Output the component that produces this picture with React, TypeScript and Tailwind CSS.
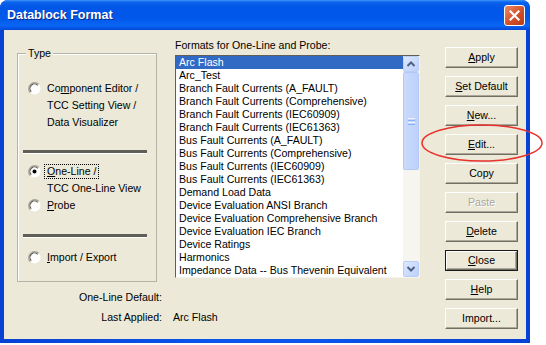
import React from 'react';

const formats = [
  'Arc Flash',
  'Arc_Test',
  'Branch Fault Currents (A_FAULT)',
  'Branch Fault Currents (Comprehensive)',
  'Branch Fault Currents (IEC60909)',
  'Branch Fault Currents (IEC61363)',
  'Bus Fault Currents (A_FAULT)',
  'Bus Fault Currents (Comprehensive)',
  'Bus Fault Currents (IEC60909)',
  'Bus Fault Currents (IEC61363)',
  'Demand Load Data',
  'Device Evaluation ANSI Branch',
  'Device Evaluation Comprehensive Branch',
  'Device Evaluation IEC Branch',
  'Device Ratings',
  'Harmonics',
  'Impedance Data -- Bus Thevenin Equivalent',
];

const Radio = ({ checked }: { checked?: boolean }) => (
  <svg width="13" height="13" viewBox="0 0 13 13" className="shrink-0">
    <circle cx="6.5" cy="6.5" r="6" fill="#ffffff" />
    <path d="M2.2 10.8 A6.1 6.1 0 0 1 10.8 2.2" fill="none" stroke="#a9a79c" strokeWidth="1.4" />
    <path d="M3.3 9.7 A4.5 4.5 0 0 1 9.7 3.3" fill="none" stroke="#55544c" strokeWidth="1.1" />
    {checked && <circle cx="6.5" cy="6.5" r="2" fill="#000000" />}
  </svg>
);

const Key = ({ children }: { children: React.ReactNode }) => <span className="underline underline-offset-[1px]">{children}</span>;

const Separator = () => (
  <div className="ml-[5px] mr-[9px] h-[4px] border-t-[3px] border-[#5f5e57] border-b border-b-white" />
);

const DialogButton = ({
  children,
  isDefault,
  disabled,
}: {
  children: React.ReactNode;
  isDefault?: boolean;
  disabled?: boolean;
}) => (
  <div className={`h-[21px] w-[73px] ${isDefault ? 'border border-[#1a1a1a]' : ''}`}>
    <div
      className={`h-full w-full flex items-center justify-center bg-[#ece9d8] border border-t-white border-l-white border-r-[#716f64] border-b-[#716f64]
        shadow-[inset_-1px_-1px_0_#aca899] ${disabled ? 'text-[#aca899] [text-shadow:1px_1px_0_#ffffff]' : 'text-black'}`}
    >
      {children}
    </div>
  </div>
);

const ScrollArrow = ({ up }: { up?: boolean }) => (
  <div className="h-[16px] w-[16px] rounded-[2px] border border-[#b9cdf6] bg-[linear-gradient(135deg,#dde8fe,#bcd0fb)] flex items-center justify-center">
    <svg width="10" height="8" viewBox="0 0 10 8">
      <path d={up ? 'M1.5 6 L5 2.5 L8.5 6' : 'M1.5 2 L5 5.5 L8.5 2'} fill="none" stroke="#4d6185" strokeWidth="2" />
    </svg>
  </div>
);

export default function App() {
  return (
    <div className="relative w-[546px] h-[345px] bg-white font-['Liberation_Sans',Arial,sans-serif] text-[10.6px] leading-[13px] text-black">
      <div className="w-[530px] h-[343px] rounded-t-[8px] overflow-hidden bg-[linear-gradient(90deg,#0842d4,#0a55ea_40%,#0a55ea_60%,#0842d4)] flex flex-col">
        {/* Title bar */}
        <div className="h-[30px] shrink-0 flex items-center justify-between pl-[7px] pr-[5px] bg-[linear-gradient(180deg,#3d91fb_0%,#0a62ec_8%,#0056e6_25%,#0057ea_60%,#0a66f4_85%,#0347d8_100%)]">
          <span className="text-white font-bold text-[12.5px] [text-shadow:1px_1px_0_#0b2a8a]">Datablock Format</span>
          <div className="h-[21px] w-[21px] rounded-[3px] border border-white bg-[linear-gradient(135deg,#ec8a66,#d2502a_55%,#b93a16)] flex items-center justify-center">
            <svg width="11" height="11" viewBox="0 0 11 11">
              <path d="M1.5 1.5 L9.5 9.5 M9.5 1.5 L1.5 9.5" stroke="#ffffff" strokeWidth="2.2" strokeLinecap="square" />
            </svg>
          </div>
        </div>

        {/* Client area */}
        <div className="flex-1 mx-[4px] mb-[4px] bg-[#ece9d8] flex">
          {/* Left column */}
          <div className="ml-[13px] w-[145px] pt-[23px] flex flex-col">
            <div className="relative w-[140px] h-[229px] border border-[#b5b3a6] shadow-[inset_1px_1px_0_#ffffff]">
              <span className="absolute -top-[7px] left-[8px] px-[2px] bg-[#ece9d8]">Type</span>
              <div className="pt-[26px]">
                <div className="pl-[10px] flex items-center gap-[6px] h-[17px]">
                  <Radio />
                  <span>
                    Co<Key>m</Key>ponent Editor /
                  </span>
                </div>
                <div className="pl-[29px] h-[17px] flex items-center">TCC Setting View /</div>
                <div className="pl-[29px] h-[17px] flex items-center">Data Visualizer</div>
              </div>
              <div className="mt-[19px]">
                <Separator />
              </div>
              <div className="mt-[9px]">
                <div className="pl-[10px] flex items-center gap-[3px] h-[17px]">
                  <Radio checked />
                  <span className="border border-dotted border-black px-[2px] leading-[13px]">
                    <Key>O</Key>ne-Line /
                  </span>
                </div>
                <div className="pl-[29px] h-[17px] flex items-center">TCC One-Line View</div>
                <div className="pl-[10px] flex items-center gap-[6px] h-[17px]">
                  <Radio />
                  <span>
                    <Key>P</Key>robe
                  </span>
                </div>
              </div>
              <div className="mt-[20px]">
                <Separator />
              </div>
              <div className="mt-[11px] pl-[10px] flex items-center gap-[6px] h-[17px]">
                <Radio />
                <span>
                  <Key>I</Key>mport / Export
                </span>
              </div>
            </div>

            <div className="mt-[9px] grid grid-cols-[145px_auto] gap-x-[11px] gap-y-[7px] -mr-[120px]">
              <span className="text-right">One-Line Default:</span>
              <span />
              <span className="text-right">Last Applied:</span>
              <span>Arc Flash</span>
            </div>
          </div>

          {/* Middle column */}
          <div className="ml-[13px] w-[245px] pt-[9px] flex flex-col">
            <span className="h-[13px]">Formats for One-Line and Probe:</span>
            <div className="mt-[3px] h-[223px] flex border border-t-[#5f5e57] border-l-[#5f5e57] border-r-[#f4f3ee] border-b-[#f4f3ee] bg-white overflow-hidden">
              <div className="flex-1 flex flex-col">
                {formats.map((f, i) => (
                  <div
                    key={f}
                    className={`h-[13px] shrink-0 pl-[3px] whitespace-nowrap ${i === 0 ? 'bg-[#316ac5] text-white' : ''}`}
                  >
                    {f}
                  </div>
                ))}
              </div>
              <div className="w-[16px] shrink-0 flex flex-col bg-[#f6f5ef]">
                <ScrollArrow up />
                <div className="h-[98px] rounded-[2px] border border-[#b4c8f6] bg-[linear-gradient(90deg,#cbdafc,#bed0fb)] flex flex-col items-center justify-center gap-[1px]">
                  <div className="w-[7px] h-[1px] bg-[#eef4fe]" />
                  <div className="w-[7px] h-[1px] bg-[#8cb0f8]" />
                  <div className="w-[7px] h-[1px] bg-[#eef4fe]" />
                  <div className="w-[7px] h-[1px] bg-[#8cb0f8]" />
                </div>
                <div className="flex-1" />
                <ScrollArrow />
              </div>
            </div>
          </div>

          {/* Buttons */}
          <div className="ml-[25px] pt-[17px] flex flex-col gap-[8px]">
            <DialogButton>
              <Key>A</Key>pply
            </DialogButton>
            <DialogButton>
              <Key>S</Key>et Default
            </DialogButton>
            <DialogButton>
              <Key>N</Key>ew...
            </DialogButton>
            <DialogButton>
              <Key>E</Key>dit...
            </DialogButton>
            <DialogButton>Copy</DialogButton>
            <DialogButton disabled>Paste</DialogButton>
            <DialogButton>
              <Key>D</Key>elete
            </DialogButton>
            <DialogButton isDefault>
              <Key>C</Key>lose
            </DialogButton>
            <DialogButton>
              <Key>H</Key>elp
            </DialogButton>
            <DialogButton>Import...</DialogButton>
          </div>
        </div>
      </div>

      {/* Red annotation ellipse */}
      <svg className="absolute inset-0 pointer-events-none" width="546" height="345">
        <ellipse cx="482" cy="143" rx="60" ry="18" fill="none" stroke="#e8302c" strokeWidth="1.5" />
      </svg>
    </div>
  );
}
